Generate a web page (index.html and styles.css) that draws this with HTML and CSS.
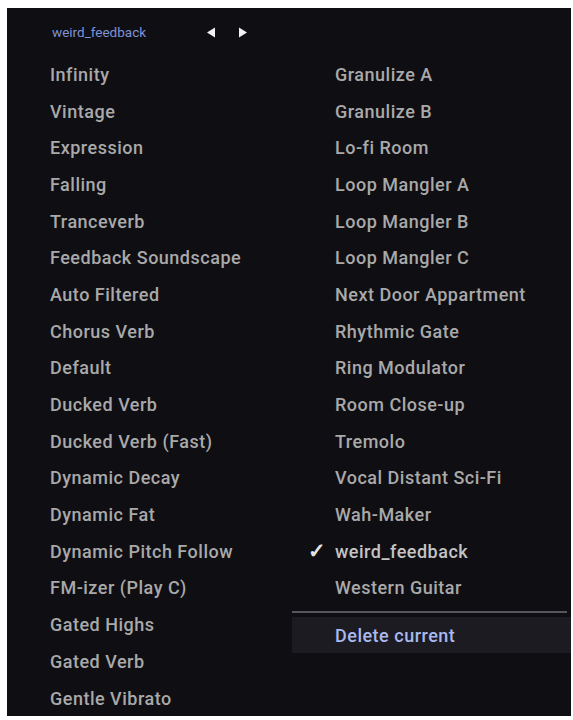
FILE: index.html
```html
<!DOCTYPE html>
<html>
<head>
<meta charset="utf-8">
<link rel="stylesheet" href="styles.css">
</head>
<body>
<div class="panel">
  <div class="header">
    <span class="current">weird_feedback</span>
    <span class="arrows">
      <svg class="arrow" width="10" height="11" viewBox="0 0 10 11"><polygon points="9,0.5 9,10.5 1,5.5" fill="#f2f2f2"/></svg>
      <svg class="arrow" width="10" height="11" viewBox="0 0 10 11"><polygon points="1,0.5 1,10.5 9,5.5" fill="#f2f2f2"/></svg>
    </span>
  </div>
  <div class="columns">
    <ul class="col left">
      <li>Infinity</li>
      <li>Vintage</li>
      <li>Expression</li>
      <li>Falling</li>
      <li>Tranceverb</li>
      <li>Feedback Soundscape</li>
      <li>Auto Filtered</li>
      <li>Chorus Verb</li>
      <li>Default</li>
      <li>Ducked Verb</li>
      <li>Ducked Verb (Fast)</li>
      <li>Dynamic Decay</li>
      <li>Dynamic Fat</li>
      <li>Dynamic Pitch Follow</li>
      <li>FM-izer (Play C)</li>
      <li>Gated Highs</li>
      <li>Gated Verb</li>
      <li>Gentle Vibrato</li>
    </ul>
    <ul class="col right">
      <li>Granulize A</li>
      <li>Granulize B</li>
      <li>Lo-fi Room</li>
      <li>Loop Mangler A</li>
      <li>Loop Mangler B</li>
      <li>Loop Mangler C</li>
      <li>Next Door Appartment</li>
      <li>Rhythmic Gate</li>
      <li>Ring Modulator</li>
      <li>Room Close-up</li>
      <li>Tremolo</li>
      <li>Vocal Distant Sci-Fi</li>
      <li>Wah-Maker</li>
      <li class="checked"><span class="check">✓</span>weird_feedback</li>
      <li>Western Guitar</li>
      <li class="sep"></li>
      <li class="action">Delete current</li>
    </ul>
  </div>
</div>
</body>
</html>
```
FILE: styles.css
```css
html, body {
  margin: 0;
  padding: 0;
  background: #ffffff;
}
body {
  padding: 8px 2px 4px 7px;
  font-family: Roboto, "Noto Sans", sans-serif;
}
.panel {
  background: #0f0e13;
  height: 708px;
  overflow: hidden;
}
.header {
  display: flex;
  align-items: center;
  height: 48px;
  padding-left: 45px;
}
.current {
  color: #7f92d6;
  font-size: 13.5px;
  width: 154px;
}
.arrows {
  display: flex;
  gap: 22px;
  align-items: center;
}
.arrow {
  display: block;
}
.columns {
  display: grid;
  grid-template-columns: 285px 1fr;
}
.col {
  list-style: none;
  margin: 0;
  padding: 0;
}
.col li {
  height: 36.7px;
  display: flex;
  align-items: center;
  padding-left: 43px;
  color: #a9a9a9;
  font-size: 18px;
  font-weight: 500;
  letter-spacing: 0.5px;
  position: relative;
}
.col li.checked {
  color: #c4c4c4;
}
.check {
  position: absolute;
  left: 16px;
  color: #e4e4e4;
  font-size: 21px;
  font-weight: 700;
}
.col li.sep {
  height: 0;
  border-top: 2px solid #56565c;
  margin: 5px 4px 4px 0;
  padding: 0;
}
.col li.action {
  background: #1b1b21;
  color: #a9b9ee;
  height: 36px;
}
```
